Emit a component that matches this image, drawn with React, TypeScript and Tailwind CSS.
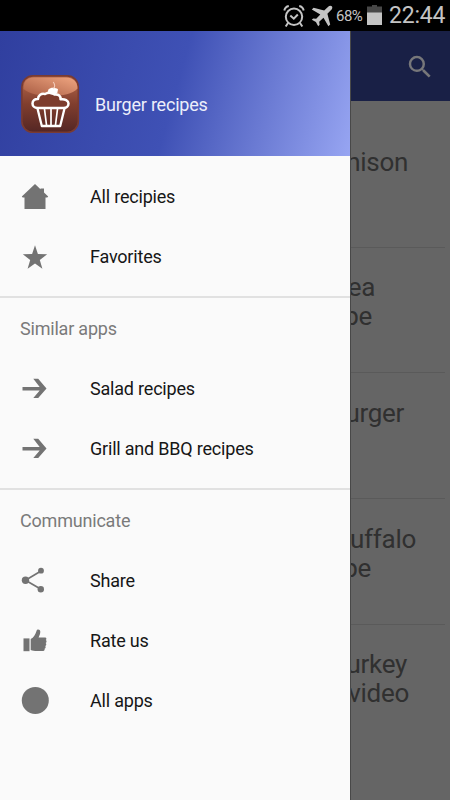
import type { ReactNode } from "react";

type Entry = { label: string; icon: ReactNode };
type Line = { text: string; inset: string };

const glyph = "block h-[30px] w-[30px] fill-[#737373]";

const HomeIcon = (
    <svg viewBox="0 0 30 30" className={glyph}>
        <path d="M15 2 1.800 14.500l.9 1H4.500V27h21V15.500h1.800l.9-1L24 10.500V6.500h-3.500v.7Z" />
    </svg>
);

const StarIcon = (
    <svg viewBox="0 0 30 30" className={glyph}>
        <path d="m15 3.200 2.900 8.800 9.300.2-7.400 5.700 2.600 8.800-7.400-5.300-7.400 5.300 2.600-8.800-7.400-5.700 9.300-.2Z" />
    </svg>
);

const ArrowIcon = (
    <svg viewBox="0 0 30 30" className={glyph}>
        <path d="M2.500 12.900h17.200l-6.400-8.200h4.900l8.300 9.800-8.300 9.600h-4.900l6.400-7.700H2.500Z" />
    </svg>
);

const ShareIcon = (
    <svg viewBox="0 0 30 30" className={glyph}>
        <path d="M5.500 14.200 21 5M5.500 14.200 21 23.300" stroke="#737373" strokeWidth="1.700" />
        <circle cx="5.500" cy="14.200" r="3.700" />
        <circle cx="21" cy="4.700" r="2.900" />
        <circle cx="20.800" cy="23.300" r="3.200" />
    </svg>
);

const ThumbIcon = (
    <svg viewBox="0 0 30 30" className={glyph}>
        <path d="M3.500 12.400h6v12.800h-6Z" />
        <path d="M10.700 12.900c3-1.400 4.700-4.300 5.800-8 .6-2 3.800-1.600 3.800.8 0 2.200-.9 3.900-1.700 5.700h6.500c1.600 0 1.600 2 .6 2.500 1.200.5 1.100 2.500-.1 3 1.100.7.9 2.600-.4 3 .9.800.5 2.500-.6 2.800.4 1.300-.5 2.400-2.500 2.400h-5.300c-2.400 0-4.300-.3-6.100-1.100Z" />
    </svg>
);

const DotIcon = (
    <svg viewBox="0 0 30 30" className={glyph}>
        <circle cx="15.300" cy="14.400" r="13.500" />
    </svg>
);

const mainEntries: Entry[] = [
    { label: "All recipies", icon: HomeIcon },
    { label: "Favorites", icon: StarIcon },
];

const similarEntries: Entry[] = [
    { label: "Salad recipes", icon: ArrowIcon },
    { label: "Grill and BBQ recipes", icon: ArrowIcon },
];

const communicateEntries: Entry[] = [
    { label: "Share", icon: ShareIcon },
    { label: "Rate us", icon: ThumbIcon },
    { label: "All apps", icon: DotIcon },
];

const recipes: Line[][] = [
    [{ text: "nison", inset: "pr-[42px]" }],
    [
        { text: "ea", inset: "pr-[75px]" },
        { text: "pe", inset: "pr-[78px]" },
    ],
    [{ text: "urger", inset: "pr-[46px]" }],
    [
        { text: "buffalo", inset: "pr-[34px]" },
        { text: "pe", inset: "pr-[79px]" },
    ],
    [
        { text: "urkey", inset: "pr-[43px]" },
        { text: "video", inset: "pr-[41px]" },
    ],
];

function StatusBar() {
    return (
        <div className="flex h-[31px] shrink-0 items-center justify-end bg-black pr-[5px] text-[#c4c4c4]">
            <svg viewBox="0 0 22 24" className="mr-[6px] h-6 w-[22px]" fill="none" stroke="#c4c4c4" strokeWidth="2">
                <circle cx="11" cy="12.800" r="8.200" />
                <path d="m7.300 11.500 3.500 3.200 4-4.200" />
                <path d="M1.300 6.500C1.800 4.300 3.500 2.500 5.800 2.100M20.700 6.500c-.5-2.200-2.200-4-4.500-4.400M5 19l-2.300 3.500M17 19l2.300 3.500" />
            </svg>
            <svg viewBox="0 0 22 22" className="mr-[3px] h-[22px] w-[22px]" fill="#c4c4c4">
                <path d="M20.800 1.200c-1-1-2.700-.5-3.900.7l-3.700 3.700L2.600 2.800.8 4.600l8.500 4.900-4.100 4.300-3-.4L.8 14.800l4.100 2.300 2.300 4.100 1.400-1.400-.4-3 4.300-4.100 4.900 8.500 1.800-1.800-2.800-10.600 3.700-3.700c1.200-1.200 1.700-2.900.7-3.900Z" />
            </svg>
            <span className="w-[28px] pt-px text-[15px] tracking-[-0.500px]">68%</span>
            <svg viewBox="0 0 15 20" className="mb-px ml-[3px] h-5 w-[15px]">
                <path d="M0 1.500h5V0h5v1.500h5V8H0Z" fill="#484848" />
                <path d="M0 7.500h15V20H0Z" fill="#c4c4c4" />
            </svg>
            <span className="ml-[7px] w-[56px] text-[23px] leading-none tracking-[-0.200px]">22:44</span>
        </div>
    );
}

function AppLogo() {
    return (
        <svg viewBox="0 0 60 60" className="h-[60px] w-[60px] shrink-0">
            <defs>
                <linearGradient id="body" x1="0" y1="0" x2="0" y2="1">
                    <stop offset="0" stopColor="#b86a4c" />
                    <stop offset=".5" stopColor="#803e2e" />
                    <stop offset="1" stopColor="#542624" />
                </linearGradient>
                <linearGradient id="gloss" x1="0" y1="1" x2="1" y2="0">
                    <stop offset="0" stopColor="#a75b42" />
                    <stop offset="1" stopColor="#f0a681" />
                </linearGradient>
            </defs>
            <rect x="1.900" y="1.900" width="56.400" height="56.400" rx="11" fill="url(#body)" stroke="#793b32" strokeWidth="1.600" />
            <path d="M3.500 15C3.500 7 7 3.500 14 3.500h32c7 0 11.500 4 11.500 11-5 5.500-15 7.500-26 7.500S9.500 20 3.500 15Z" fill="url(#gloss)" />
            <path
                d="M17.500 34c-3 0-5-2-5-4.500 0-3 2.500-4.700 5.500-4.400 0-3.800 3.500-6 7-5 2.500-1.800 8-2 9.500.4 4-.6 6.500 1.500 6 4.800 4.500-.6 8 1.200 8 4.200 0 2.700-2.200 4.500-5 4.500Z"
                fill="#7d3d2e"
                stroke="#fff"
                strokeWidth="2.500"
                strokeLinejoin="round"
            />
            <path d="M17.500 34.500 21.800 52h18.400l4.300-17.500" fill="none" stroke="#fff" strokeWidth="2.300" strokeLinejoin="round" />
            <path d="m24.500 35 2 16M31 35v16M37.500 35l-2 16" fill="none" stroke="#fff" strokeWidth="1.700" />
            <path d="M28.500 15.500c2-2.500 7-2 9.500-.3l-.7 4-4 1.800-6.300-1.500Z" fill="#fff" />
            <path d="M33.500 14.500c1.700-1.500 1.500-4.500-.3-6.500" fill="none" stroke="#f2cdbd" strokeWidth="1.100" />
        </svg>
    );
}

function NavRow({ label, icon }: Entry) {
    return (
        <li className="flex h-[60px] items-center pl-5 text-[18px] tracking-[-0.200px] text-[#161616]">
            {icon}
            <span className="ml-10 pb-0.5">{label}</span>
        </li>
    );
}

function NavGroup({ title, entries }: { title: string; entries: Entry[] }) {
    return (
        <section className="mt-[9px] border-t-2 border-[#e1e1e1]">
            <h2 className="flex h-[61px] items-center pl-5 text-[18px] tracking-[-0.200px] text-[#7a7a7a]">{title}</h2>
            <ul>
                {entries.map((entry) => (
                    <NavRow key={entry.label} {...entry} />
                ))}
            </ul>
        </section>
    );
}

function Drawer() {
    return (
        <nav className="w-[350px] shrink-0 bg-[#fafafa]">
            <header className="flex h-[125px] items-center bg-[linear-gradient(105.600deg,#303f9f_0%,#3f51b5_50%,#97a5f2_100%)] pt-[21px] pl-5">
                <AppLogo />
                <h1 className="ml-[15px] text-[18px] tracking-[-0.200px] text-[#eceefa]">Burger recipes</h1>
            </header>
            <ul className="pt-[11px]">
                {mainEntries.map((entry) => (
                    <NavRow key={entry.label} {...entry} />
                ))}
            </ul>
            <NavGroup title="Similar apps" entries={similarEntries} />
            <NavGroup title="Communicate" entries={communicateEntries} />
        </nav>
    );
}

// the part of the recipe list left uncovered by the open drawer
function RecipeList() {
    return (
        <main className="flex min-w-0 flex-1 flex-col overflow-hidden border-l border-[#484848] bg-[#656565]">
            <div className="-ml-px flex h-[70px] shrink-0 items-center justify-end bg-[#192046] pt-px pr-[15px]">
                <svg viewBox="0 0 24 24" className="h-[30px] w-[30px] fill-[#77777a]">
                    <path d="M15.500 14h-.79l-.28-.27A6.471 6.471 0 0 0 16 9.500 6.500 6.500 0 1 0 9.500 16c1.610 0 3.090-.59 4.230-1.570l.27.28v.79l5 4.990L20.490 19l-4.990-5zm-6 0C7.010 14 5 11.990 5 9.500S7.010 5 9.500 5 14 7.010 14 9.500 11.990 14 9.500 14z" />
                </svg>
            </div>
            <ul className="pt-[21px]">
                {recipes.map((lines, i) => (
                    <li key={i} className="group h-[125.700px]">
                        <div className="mr-[5px] h-full border-b border-[#5a5a5a] pt-[25.500px] group-last:border-b-0">
                            {lines.map((line) => (
                                <div
                                    key={line.text}
                                    className="-mr-[5px] flex justify-end text-[26px] leading-[29px] tracking-[-0.300px] text-[#303030]"
                                >
                                    <span className={line.inset}>{line.text}</span>
                                </div>
                            ))}
                        </div>
                    </li>
                ))}
            </ul>
        </main>
    );
}

export default function App() {
    return (
        <div className="flex h-[800px] w-[450px] flex-col overflow-hidden font-['Roboto',sans-serif]">
            <StatusBar />
            <div className="flex min-h-0 flex-1">
                <Drawer />
                <RecipeList />
            </div>
        </div>
    );
}
